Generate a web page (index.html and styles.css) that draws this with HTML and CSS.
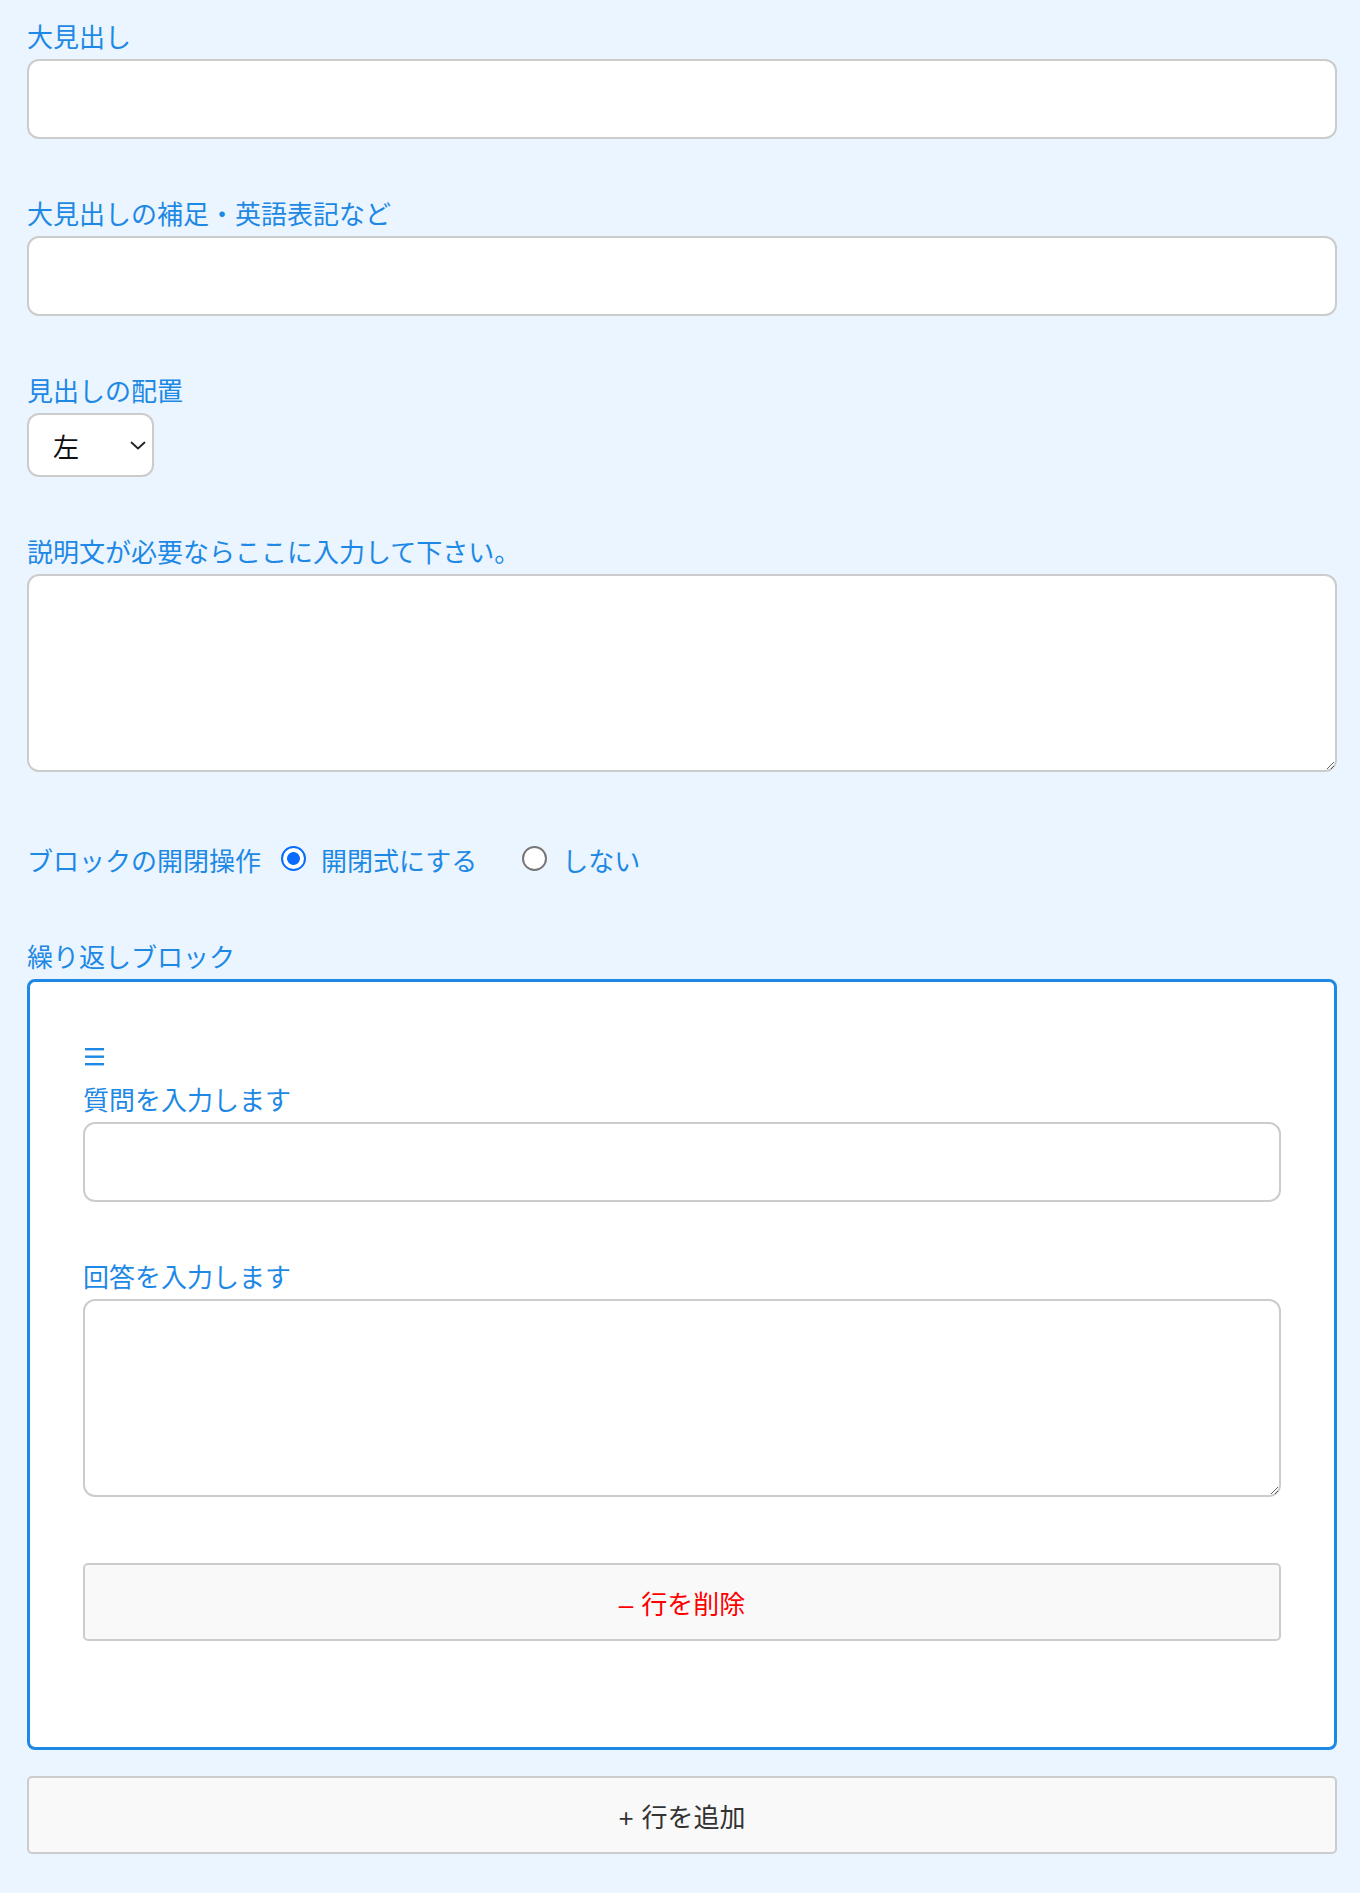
FILE: index.html
```html
<!DOCTYPE html>
<html lang="ja">
<head>
  <meta charset="UTF-8" />
  <meta name="viewport" content="width=device-width, initial-scale=1" />
  <title>ブロック編集</title>
  <link rel="stylesheet" href="styles.css">
</head>
<body>
  <div class="field">
    <label class="label" for="title">大見出し</label>
    <input class="text-input" id="title" type="text" />
  </div>

  <div class="field">
    <label class="label" for="subtitle">大見出しの補足・英語表記など</label>
    <input class="text-input" id="subtitle" type="text" />
  </div>

  <div class="field">
    <label class="label" for="align">見出しの配置</label>
    <div class="select-wrap">
      <select class="select" id="align">
        <option>左</option>
        <option>中央</option>
        <option>右</option>
      </select>
      <svg class="chevron" width="16" height="9" viewBox="0 0 16 9" aria-hidden="true">
        <path d="M1.5 1.5 L8 7.5 L14.5 1.5" fill="none" stroke="#222" stroke-width="1.8" stroke-linecap="round" stroke-linejoin="round"/>
      </svg>
    </div>
  </div>

  <div class="field">
    <label class="label" for="desc">説明文が必要ならここに入力して下さい。</label>
    <textarea class="text-area" id="desc"></textarea>
  </div>

  <div class="radio-row" role="radiogroup">
    <span class="label radio-title">ブロックの開閉操作</span>
    <label class="radio-option">
      <input type="radio" name="toggle" checked />
      <span>開閉式にする</span>
    </label>
    <label class="radio-option">
      <input type="radio" name="toggle" />
      <span>しない</span>
    </label>
  </div>

  <div class="label">繰り返しブロック</div>
  <div class="repeat-box">
    <div class="repeat-item">
      <div class="handle" title="並べ替え">
        <svg width="19" height="19" viewBox="0 0 19 19" aria-hidden="true">
          <rect x="0" y="1" width="19" height="2.4" fill="#1e88e5"/>
          <rect x="0" y="8.5" width="19" height="2.4" fill="#1e88e5"/>
          <rect x="0" y="16" width="19" height="2.4" fill="#1e88e5"/>
        </svg>
      </div>

      <div class="field">
        <label class="label" for="q1">質問を入力します</label>
        <input class="text-input" id="q1" type="text" />
      </div>

      <div class="field">
        <label class="label" for="a1">回答を入力します</label>
        <textarea class="text-area" id="a1"></textarea>
      </div>

      <button class="row-btn remove-btn" type="button"><span class="sym">–</span>行を削除</button>
    </div>
  </div>

  <button class="row-btn add-btn" type="button"><span class="sym">+</span>行を追加</button>
</body>
</html>
```

FILE: styles.css
```css
body {
  margin: 0;
  padding: 17px 23px 39px 27px;
  background-color: #eaf5ff;
  font-family: "Noto Sans CJK JP", "Noto Sans", sans-serif;
  font-size: 26px;
  color: #222;
}
.field {
  margin-bottom: 55px;
}
.label {
  display: block;
  color: #1e88e5;
  line-height: 38px;
  margin-bottom: 4px;
}
.text-input,
.text-area,
.select {
  font-family: inherit;
  font-size: inherit;
  background: #fff;
  border: 2px solid #ccc;
  border-radius: 12px;
  box-sizing: border-box;
  outline: none;
}
.text-input {
  display: block;
  width: 100%;
  height: 80px;
  padding: 0 20px;
}
.text-area {
  display: block;
  width: 100%;
  height: 198px;
  padding: 14px 20px;
}
.select-wrap {
  position: relative;
  display: inline-block;
}
.select {
  appearance: none;
  -webkit-appearance: none;
  width: 127px;
  height: 64px;
  padding: 0 0 0 24px;
  color: #111;
  display: block;
}
.chevron {
  position: absolute;
  right: 8px;
  top: 28px;
  pointer-events: none;
}
.radio-row {
  display: flex;
  align-items: center;
  height: 38px;
  margin: 69px 0 58px;
}
.radio-title {
  margin: 0 20px 0 0;
}
.radio-option {
  display: flex;
  align-items: center;
  gap: 15px;
  color: #1e88e5;
  line-height: 38px;
  cursor: pointer;
}
.radio-option + .radio-option {
  margin-left: 45px;
}
.radio-option input {
  appearance: none;
  -webkit-appearance: none;
  margin: -4px 0 0;
  width: 25px;
  height: 25px;
  border: 2px solid #767676;
  border-radius: 50%;
  background: #fff;
  box-sizing: border-box;
}
.radio-option input:checked {
  border-color: #0a6cff;
  background: radial-gradient(circle, #0a6cff 0 6px, #fff 6.8px);
}
.repeat-box {
  background: #fff;
  border: 3px solid #1e88e5;
  border-radius: 8px;
  padding: 55px 53px 106px;
}
.handle {
  height: 38px;
  display: flex;
  align-items: center;
  margin: 0 0 5px 2px;
}
.repeat-item .field:last-of-type {
  margin-bottom: 66px;
}
.row-btn {
  display: block;
  width: 100%;
  height: 78px;
  background: #f9f9f9;
  border: 2px solid #ccc;
  border-radius: 5px;
  font-family: inherit;
  font-size: inherit;
  cursor: pointer;
}
.sym {
  display: inline-block;
  font-family: "Liberation Sans", sans-serif;
  margin-right: 8px;
}
.remove-btn {
  color: #ff0000;
}
.add-btn {
  margin-top: 26px;
  color: #333;
}
```
